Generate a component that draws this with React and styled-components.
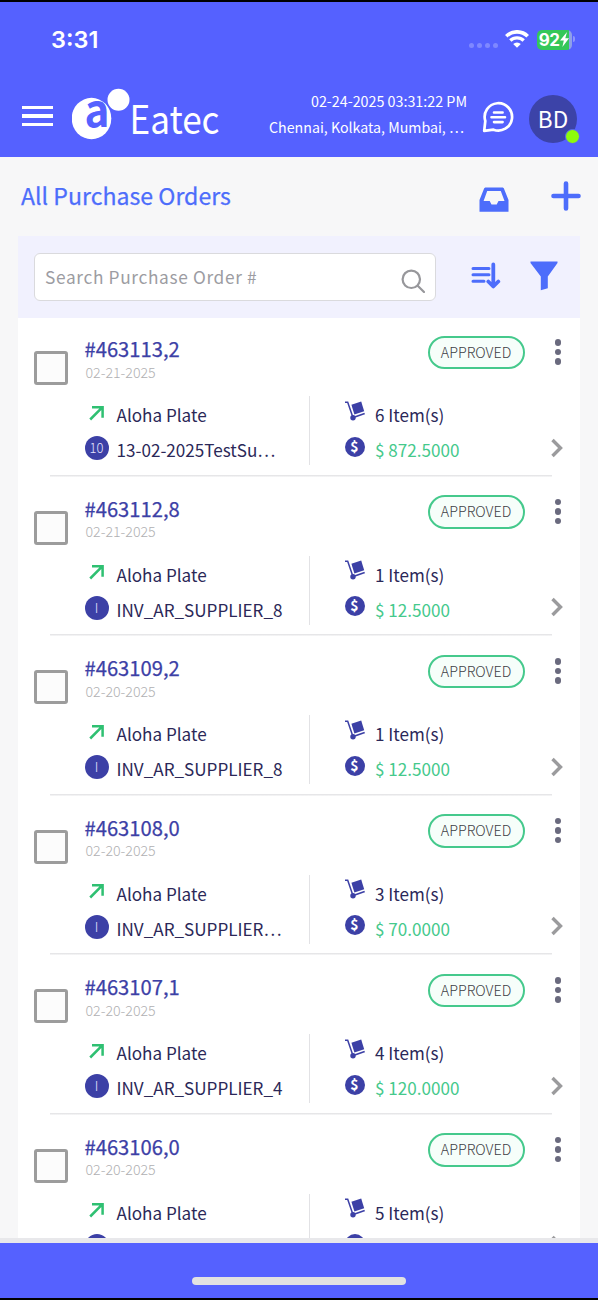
import React, { useState } from 'react';
import styled, { createGlobalStyle } from 'styled-components';

const orders = [
  { id: '#463113,2', date: '02-21-2025', outlet: 'Aloha Plate', tag: '10', supplier: '13-02-2025TestSu…', items: 6, total: '872.5000' },
  { id: '#463112,8', date: '02-21-2025', outlet: 'Aloha Plate', tag: 'I', supplier: 'INV_AR_SUPPLIER_8', items: 1, total: '12.5000' },
  { id: '#463109,2', date: '02-20-2025', outlet: 'Aloha Plate', tag: 'I', supplier: 'INV_AR_SUPPLIER_8', items: 1, total: '12.5000' },
  { id: '#463108,0', date: '02-20-2025', outlet: 'Aloha Plate', tag: 'I', supplier: 'INV_AR_SUPPLIER…', items: 3, total: '70.0000' },
  { id: '#463107,1', date: '02-20-2025', outlet: 'Aloha Plate', tag: 'I', supplier: 'INV_AR_SUPPLIER_4', items: 4, total: '120.0000' },
  { id: '#463106,0', date: '02-20-2025', outlet: 'Aloha Plate', tag: '', supplier: '', items: 5, total: '' },
];

const Wifi = () => (
  <svg width="24" height="18" viewBox="0 0 24 18">
    <path d="M1.3 6.2a15.3 15.3 0 0 1 21.4 0" fill="none" stroke="#fff" strokeWidth="3.7" />
    <path d="M5.3 10.5a9.6 9.6 0 0 1 13.4 0" fill="none" stroke="#fff" strokeWidth="3.3" />
    <path d="M12 17.8 8.2 14a5.4 5.4 0 0 1 7.6 0z" fill="#fff" />
  </svg>
);

const Logo = () => (
  <svg width="150" height="54" viewBox="0 0 150 54">
    <ellipse cx="19.500" cy="31.500" rx="19.8" ry="20.7" fill="#fff" />
    <text x="12.500" y="39.500" fontFamily="Noto Sans CJK JP, sans-serif" fontWeight="700" fontSize="45"
      textLength="25" lengthAdjust="spacingAndGlyphs" fill="#5561ff">a</text>
    <circle cx="46.5" cy="12.8" r="12.500" fill="#5561ff" />
    <circle cx="46.5" cy="12.8" r="11" fill="#fff" />
    <text x="57.500" y="47" fontFamily="Noto Sans CJK JP, sans-serif" fontSize="39"
      textLength="90" lengthAdjust="spacingAndGlyphs" fill="#fff">Eatec</text>
  </svg>
);

const Chat = () => (
  <svg width="32" height="32" viewBox="0 0 32 32" fill="none" stroke="#fff" strokeLinecap="round">
    <path d="M2.2 29.900 3.300 20A13.700 13.700 0 1 1 11.500 28.700z" strokeWidth="2.700" strokeLinejoin="round" />
    <path d="M12 11.500h8.600M9.500 16.300h13.500M12 21.100h8.600" strokeWidth="2.600" />
  </svg>
);

const Inbox = () => (
  <svg width="30" height="26" viewBox="0 0 30 26">
    <path fillRule="evenodd" fill="#4d6dfb"
      d="M6.2.5h17.6l1 .7L29.5 13v11.7H.5V13L5.2 1.2zM8.2 4 4.6 14h6.1l1.8 3.6h5.2l1.8-3.6h6L21.800 4z" />
  </svg>
);

const Plus = () => (
  <svg width="30" height="30" viewBox="0 0 30 30">
    <path d="M15 2.500v25M2.500 15h25" stroke="#4d6dfb" strokeWidth="4.6" strokeLinecap="round" />
  </svg>
);

const Magnifier = () => (
  <svg width="24" height="24" viewBox="0 0 24 24" fill="none" stroke="#97979b" strokeWidth="2.2">
    <circle cx="10.300" cy="10.300" r="8.700" />
    <path d="m16.700 16.700 6.300 6.300" strokeLinecap="round" />
  </svg>
);

const Sort = () => (
  <svg width="30" height="28" viewBox="0 0 30 28" fill="none" stroke="#4d6dfb" strokeLinecap="round">
    <path d="M2 7.500h16M2 13.800h16M2 20.200h11" strokeWidth="3" />
    <path d="M22.300 3.500v21M17.300 20.500l5 5 5-5" strokeWidth="3.800" strokeLinejoin="round" />
  </svg>
);

const Funnel = () => (
  <svg width="28" height="30" viewBox="0 0 28 30">
    <path d="M.5.500h27v1.500L17.800 15.500v11.700l-7 2V15.500L.5 2z" fill="#4d6dfb" />
  </svg>
);

const ArrowOut = () => (
  <svg width="16" height="16" viewBox="0 0 16 16" fill="none" stroke="#2fc072" strokeWidth="2.500">
    <path d="M1.200 14.500 13 2.700M3 2.200h10.600v10.600" />
  </svg>
);

const Trolley = () => (
  <svg width="22" height="22" viewBox="0 0 22 22">
    <path d="M1 2.200h2.700l5 14.500" fill="none" stroke="#3c40a6" strokeWidth="1.500" />
    <path d="m10 17.200 10.700-3.700" stroke="#3c40a6" strokeWidth="1.700" />
    <circle cx="9" cy="17.800" r="2.700" fill="#3c40a6" />
    <path d="m7.400 4.700 9.800-3.200 3 9.700-9.800 3.300z" fill="#3c40a6" />
  </svg>
);

const Chevron = () => (
  <svg width="13" height="20" viewBox="0 0 13 20">
    <path d="m1.500 2 8 8-8 8" fill="none" stroke="#9b9b9d" strokeWidth="3.400" />
  </svg>
);

export default function App() {
  const [checked, setChecked] = useState({});
  const toggle = (id) => setChecked({ ...checked, [id]: !checked[id] });

  return (
    <Screen>
      <GlobalStyle />
      <Header>
        <StatusBar>
          <Clock>3:31</Clock>
          <Signal><i /><i /><i /><i /></Signal>
          <Wifi />
          <Battery>
            <span>92</span>
            <svg width="9" height="15" viewBox="0 0 9 15"><path d="M7 0 0 8.500h3.800L2.400 15 9 6.300H5.300z" fill="#fff" /></svg>
          </Battery>
          <BatteryTip />
        </StatusBar>
        <NavBar>
          <MenuButton aria-label="Menu"><i /><i /><i /></MenuButton>
          <Logo />
          <Session>
            <Stamp>02-24-2025 03:31:22 PM</Stamp>
            <Place>Chennai, Kolkata, Mumbai, …</Place>
          </Session>
          <Chat />
          <Avatar>BD<Online /></Avatar>
        </NavBar>
      </Header>

      <TitleBar>
        <Title>All Purchase Orders</Title>
        <Inbox />
        <Plus />
      </TitleBar>

      <Card>
        <Tools>
          <SearchBox>
            <input type="text" placeholder="Search Purchase Order #" />
            <Magnifier />
          </SearchBox>
          <Sort />
          <Funnel />
        </Tools>
        {orders.map((o) => (
          <Row key={o.id}>
            <Check $on={checked[o.id]} onClick={() => toggle(o.id)} aria-label={o.id} />
            <Body>
              <Head>
                <div>
                  <OrderId>{o.id}</OrderId>
                  <OrderDate>{o.date}</OrderDate>
                </div>
                <Status>APPROVED</Status>
                <More><i /><i /><i /></More>
              </Head>
              <Details>
                <Parties>
                  <Line><Mark $w={24} $up={2.5}><ArrowOut /></Mark><Label>{o.outlet}</Label></Line>
                  <Line><Mark $w={24} $up={2}><Tag>{o.tag}</Tag></Mark><Label>{o.supplier}</Label></Line>
                </Parties>
                <Amounts>
                  <Line><Mark $w={22} $up={4.5}><Trolley /></Mark><Label>{o.items} Item(s)</Label></Line>
                  <Line><Mark $w={22} $up={3.5}><Coin>{o.total && '$'}</Coin></Mark>{o.total && <Label $money>$ {o.total}</Label>}</Line>
                </Amounts>
                <Chevron />
              </Details>
            </Body>
          </Row>
        ))}
      </Card>

      <Footer><HomeBar /></Footer>
    </Screen>
  );
}

const GlobalStyle = createGlobalStyle`
*{
    box-sizing:border-box;
}
body{
    margin:0;
    background:#f7f7f7;
    font-family:"Noto Sans CJK JP", "Open Sans", sans-serif;
}
button{
    background:none;
    border:none;
    padding:0;
    cursor:pointer;
}
svg{
    display:block;
    flex:none;
}
`;

const Screen = styled.div`
    display:flex;
    flex-direction:column;
    width:598px;
    height:1300px;
    overflow:hidden;
    background:#f7f7f8;
`;

const Header = styled.header`
    flex:none;
    height:157px;
    border-top:2px solid #000;
    background:#5561ff;
    color:#fff;
`;

const StatusBar = styled.div`
    display:flex;
    align-items:center;
    height:74px;
    padding:0 23.500px 0 51px;
`;

const Clock = styled.div`
    flex:1;
    padding-top:2px;
    font:600 23.500px/30px Inter, sans-serif;
`;

const Signal = styled.div`
    display:flex;
    gap:3px;
    margin:12px 7px 0 0;
    i{
        width:5px;
        height:5px;
        border-radius:50%;
        background:#7f88ff;
    }
`;

const Battery = styled.div`
    display:flex;
    align-items:center;
    justify-content:center;
    gap:1px;
    width:35px;
    height:20px;
    margin:1px 0 0 8px;
    border-radius:5px;
    background:linear-gradient(90deg, #34c759 32px, #8fa0e8 32px);
    font:700 17px/20px Inter, sans-serif;
    letter-spacing:-0.5px;
`;

const BatteryTip = styled.div`
    width:2px;
    height:6px;
    margin-left:1px;
    border-radius:0 2px 2px 0;
    background:#8d95ff;
`;

const NavBar = styled.div`
    display:flex;
    align-items:center;
    height:81px;
    padding:1px 21px 0 22px;
    > svg:first-of-type{
        margin:-7px 0 0 19px;
    }
`;

const MenuButton = styled.button`
    display:flex;
    flex-direction:column;
    gap:5.5px;
    width:31px;
    margin-top:-2px;
    i{
        height:3.3px;
        background:#fff;
    }
`;

const Session = styled.div`
    flex:1;
    margin:-7px 15px 0 0;
    text-align:right;
    white-space:nowrap;
`;

const Stamp = styled.div`
    font-size:14.3px;
    line-height:27px;
`;

const Place = styled.div`
    padding-right:3px;
    font-size:14.200px;
    line-height:27px;
`;

const Avatar = styled.div`
    position:relative;
    width:48px;
    height:48px;
    margin:3px 0 0 15px;
    border-radius:50%;
    background:#3c43a8;
    font-size:22.500px;
    line-height:46px;
    text-align:center;
`;

const Online = styled.span`
    position:absolute;
    right:-3px;
    bottom:-1px;
    width:15px;
    height:15px;
    border:1px solid #5561ff;
    border-radius:50%;
    background:#8dfb0c;
`;

const TitleBar = styled.div`
    display:flex;
    align-items:center;
    flex:none;
    height:79px;
    padding:0 17px 2px 21px;
    svg + svg{
        margin-left:42px;
    }
    svg:first-of-type{
        margin-top:8px;
    }
`;

const Title = styled.h1`
    flex:1;
    margin:-2px 0 0;
    font-size:23.100px;
    font-weight:400;
    line-height:30px;
    color:#4d6dfb;
    -webkit-text-stroke:0.25px #4d6dfb;
`;

const Card = styled.main`
    flex:1;
    min-height:0;
    overflow:hidden;
    margin:0 18px;
    background:#fff;
`;

const Tools = styled.div`
    display:flex;
    align-items:center;
    height:82px;
    padding:0 22px 0 16px;
    background:#f1f1fe;
    > svg{
        margin:-3px 0 0 29px;
    }
    > svg:first-of-type{
        margin:-5px 0 0 35px;
    }
`;

const SearchBox = styled.label`
    display:flex;
    align-items:center;
    width:403px;
    height:48px;
    padding:0 10px 0 10px;
    border:1.500px solid #dadadd;
    border-radius:6px;
    background:#fff;
    input{
        flex:1;
        min-width:0;
        padding:0;
        border:none;
        outline:none;
        font:400 17.300px/26px "Noto Sans CJK JP", sans-serif;
        letter-spacing:0.650px;
    }
    input::placeholder{
        color:#9c9ca2;
    }
    svg{
        margin-top:7px;
    }
`;

const Row = styled.section`
    display:flex;
    gap:17px;
    height:159.5px;
    padding:0 16px 0 15.5px;
    background:linear-gradient(#e6e6e8, #e6e6e8) no-repeat 32px 156.500px / 502px 1.500px;
`;

const Check = styled.button`
    flex:none;
    width:34px;
    height:34px;
    margin-top:33.400px;
    border:3px solid #9c9c9c;
    border-radius:3px;
    background:${({ $on }) => ($on ? '#5561ff' : '#fcfcfc')};
`;

const Body = styled.div`
    flex:1;
`;

const Head = styled.div`
    display:flex;
    height:78px;
    > div:first-child{
        flex:1;
        padding-top:18px;
    }
`;

const OrderId = styled.div`
    font-size:20.200px;
    font-weight:400;
    line-height:26px;
    color:#3c40a6;
    -webkit-text-stroke:0.25px #3c40a6;
`;

const OrderDate = styled.div`
    margin-top:-0.500px;
    padding-left:1px;
    font-size:14.200px;
    font-weight:300;
    line-height:20px;
    color:#b0b0b2;
`;

const Status = styled.span`
    width:97px;
    height:33.500px;
    margin-top:17.800px;
    border:2px solid #45c98c;
    border-radius:17px;
    background:#f6fefa;
    font-size:14.300px;
    font-weight:300;
    line-height:28px;
    text-align:center;
    color:#3d4045;
`;

const More = styled.button`
    display:flex;
    flex-direction:column;
    gap:3.200px;
    margin:21px 3px 0 30px;
    i{
        width:6.500px;
        height:6.500px;
        border-radius:50%;
        background:#6a6a7e;
    }
`;

const Details = styled.div`
    display:flex;
    align-items:center;
    height:69px;
    > svg{
        margin-top:34px;
    }
`;

const Parties = styled.div`
    width:225px;
    height:69px;
    padding-top:1.500px;
    border-right:1.500px solid #e2e2e5;
`;

const Amounts = styled.div`
    flex:1;
    height:69px;
    padding:1.500px 0 0 34px;
    > div{
        gap:9.500px;
    }
`;

const Line = styled.div`
    display:flex;
    align-items:center;
    gap:8px;
    height:35.300px;
`;

const Mark = styled.span`
    display:flex;
    justify-content:center;
    flex:none;
    width:${({ $w }) => $w}px;
    margin-bottom:${({ $up }) => $up * 2}px;
`;

const Label = styled.span`
    font-size:17.100px;
    line-height:26px;
    white-space:nowrap;
    color:${({ $money }) => ($money ? '#45c98c' : '#2b2858')};
`;

const Tag = styled.b`
    width:24px;
    height:24px;
    border-radius:50%;
    background:#3c40a6;
    font-size:13px;
    font-weight:300;
    line-height:24px;
    text-align:center;
    color:#e4e4ff;
`;

const Coin = styled.b`
    width:20px;
    height:20px;
    border-radius:50%;
    background:#3c40a6;
    font-size:14px;
    font-weight:700;
    line-height:19px;
    text-align:center;
    color:#fff;
`;

const Footer = styled.footer`
    display:flex;
    justify-content:center;
    flex:none;
    height:62px;
    padding-top:34px;
    border-top:5px solid #e8e8eb;
    border-bottom:2px solid #000;
    background:#5561ff;
`;

const HomeBar = styled.div`
    width:214px;
    height:8px;
    border-radius:4px;
    background:#e2e2e2;
`;
